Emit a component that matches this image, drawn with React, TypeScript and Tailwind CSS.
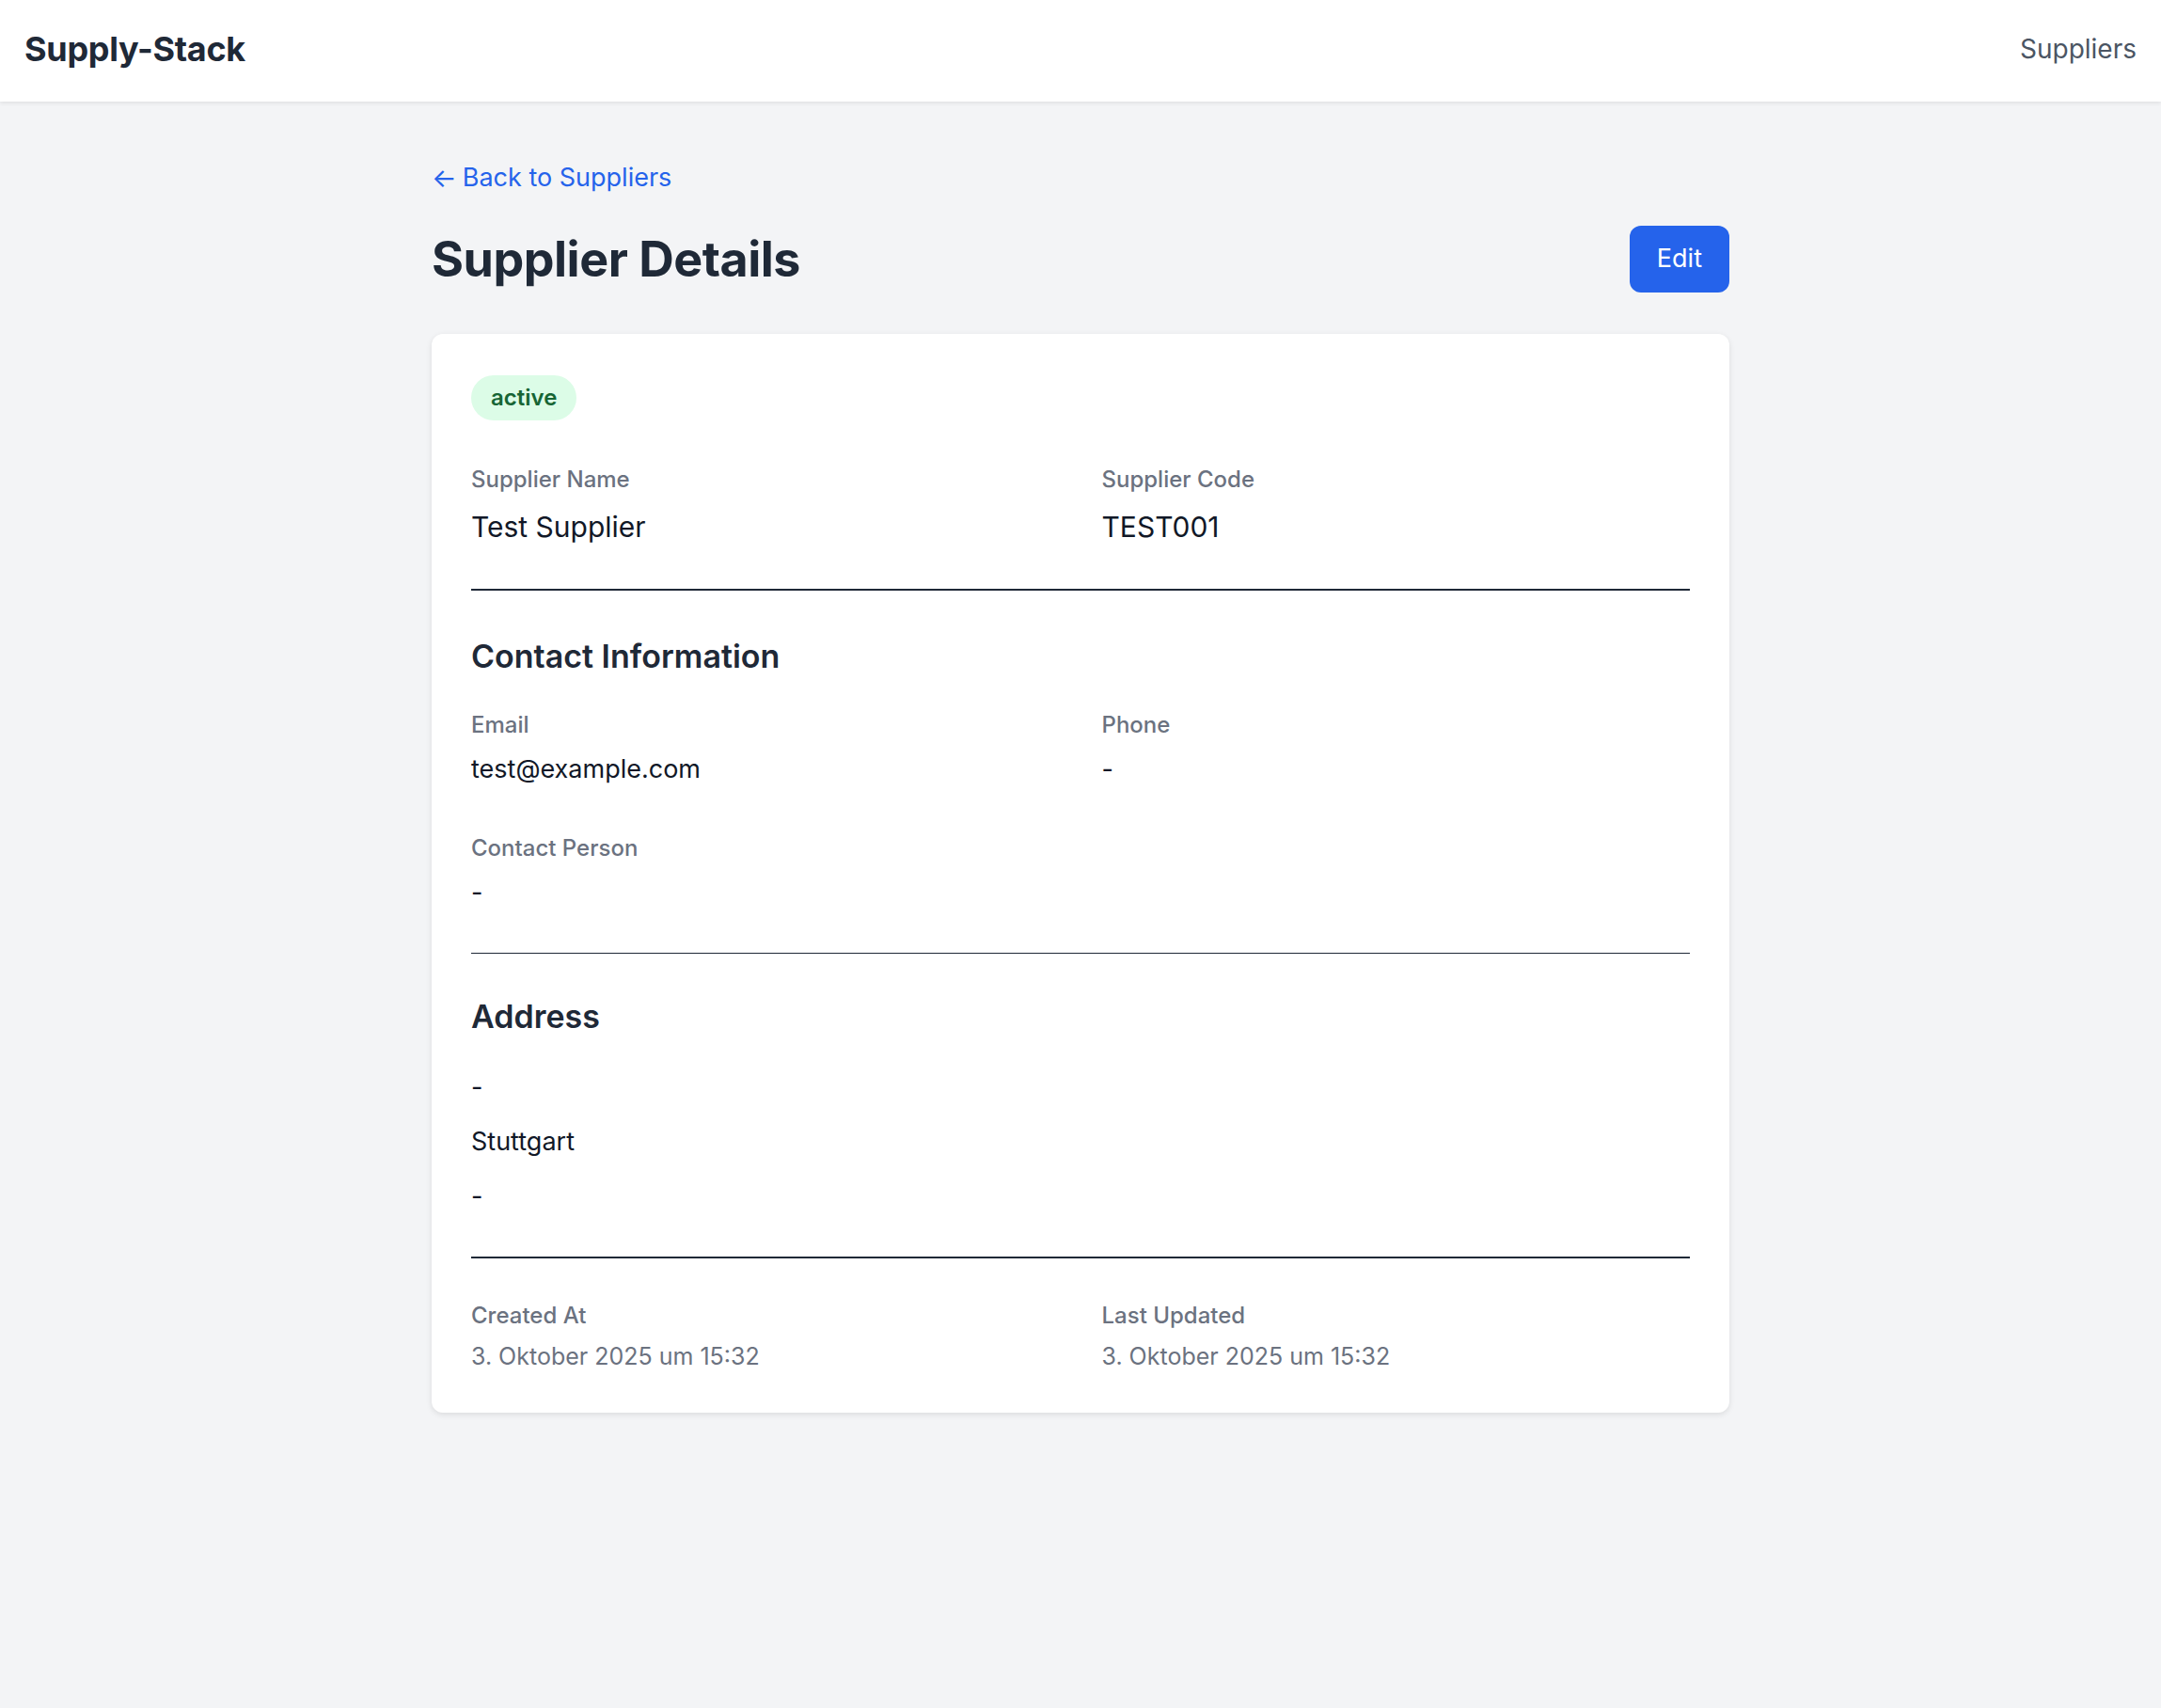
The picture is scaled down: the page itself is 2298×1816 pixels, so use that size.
interface FieldProps {
	label: string;
	value: string;
	big?: boolean;
}

const Field: React.FC<FieldProps> = ({ label, value, big }) => (
	<div className="flex flex-col">
		<dt className="text-[24px] leading-[33px] font-medium text-[#6b7280]">{label}</dt>
		<dd
			className={
				big
					? "mt-[13px] text-[30px] leading-[42px] text-[#111827]"
					: "mt-[12px] text-[27px] leading-[38px] text-[#111827]"
			}
		>
			{value}
		</dd>
	</div>
);

const Divider = () => <div className="h-[1.5px] bg-[#1f2937]" />;

export default function App() {
	return (
		<div className="min-h-[1816px] bg-[#f3f4f6] font-['Inter','Liberation_Sans',sans-serif]">
			<header className="flex h-[108px] items-center justify-between bg-white px-[26px] pb-[5px] shadow-[0_2px_4px_rgba(0,0,0,0.08)]">
				<span className="text-[36px] font-bold tracking-[-0.3px] text-[#1f2937]">Supply-Stack</span>
				<nav className="text-[28px] text-[#4b5563]">Suppliers</nav>
			</header>

			<main className="mx-auto w-[1380px] pt-[63px] pb-[48px]">
				<a href="#" className="flex items-center gap-[6px] text-[27px] leading-[36px] text-[#2563eb]">
					<span className="text-[28px]">←</span>
					Back to Suppliers
				</a>

				<div className="mt-[33px] flex items-center justify-between">
					<h1 className="text-[52px] leading-[60px] font-bold tracking-[-0.5px] text-[#1f2937]">Supplier Details</h1>
					<button className="h-[71px] rounded-[12px] bg-[#2563eb] px-[29px] text-[27px] text-white">Edit</button>
				</div>

				<section className="mt-[44px] rounded-[12px] bg-white px-[42px] pt-[44px] pb-[43px] shadow-[0_2px_6px_rgba(0,0,0,0.1)]">
					<span className="inline-flex h-[48px] items-center rounded-full bg-[#dcfce7] px-[21px] text-[24px] font-semibold text-[#166534]">
						active
					</span>

					<dl className="mt-[46px] grid grid-cols-2 gap-x-[45px] pb-[45px]">
						<Field label="Supplier Name" value="Test Supplier" big />
						<Field label="Supplier Code" value="TEST001" big />
					</dl>

					<Divider />

					<h2 className="mt-[48px] text-[34px] leading-[44px] font-semibold text-[#1f2937]">Contact Information</h2>
					<dl className="mt-[34px] grid grid-cols-2 gap-x-[45px] gap-y-[48px] pb-[45px]">
						<Field label="Email" value="test@example.com" />
						<Field label="Phone" value="-" />
						<Field label="Contact Person" value="-" />
					</dl>

					<Divider />

					<h2 className="mt-[45px] text-[34px] leading-[44px] font-semibold text-[#1f2937]">Address</h2>
					<div className="mt-[34px] flex flex-col gap-[20px] pb-[45px] text-[27px] leading-[38px] text-[#111827]">
						<p>-</p>
						<p>Stuttgart</p>
						<p>-</p>
					</div>

					<Divider />

					<dl className="mt-[44px] grid grid-cols-2 gap-x-[45px]">
						<div className="flex flex-col">
							<dt className="text-[24px] leading-[33px] font-medium text-[#6b7280]">Created At</dt>
							<dd className="mt-[10px] text-[25px] leading-[34px] text-[#6b7280]">3. Oktober 2025 um 15:32</dd>
						</div>
						<div className="flex flex-col">
							<dt className="text-[24px] leading-[33px] font-medium text-[#6b7280]">Last Updated</dt>
							<dd className="mt-[10px] text-[25px] leading-[34px] text-[#6b7280]">3. Oktober 2025 um 15:32</dd>
						</div>
					</dl>
				</section>
			</main>
		</div>
	);
}
